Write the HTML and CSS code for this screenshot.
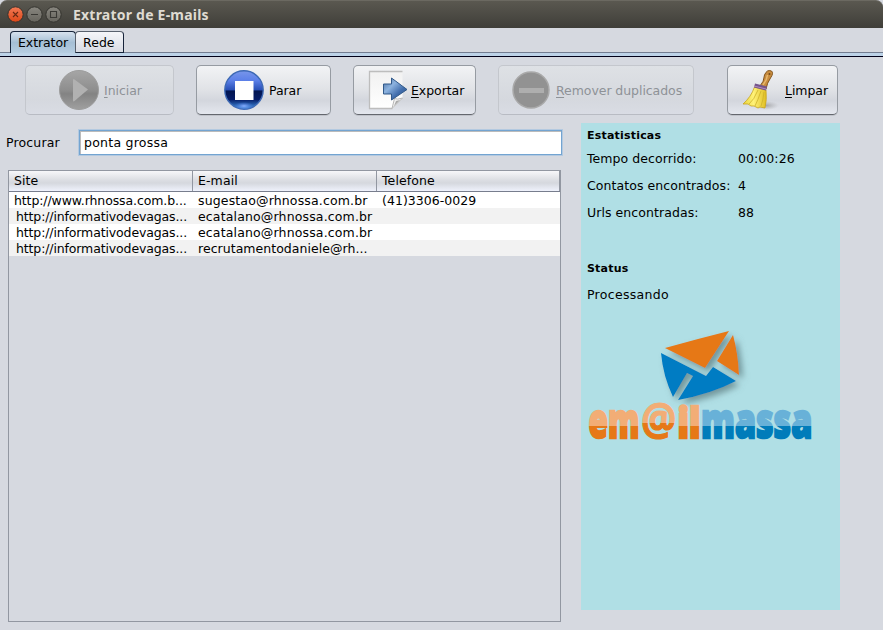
FILE: index.html
```html
<!DOCTYPE html>
<html lang="pt-BR">
<head>
<meta charset="utf-8">
<title>Extrator de E-mails</title>
<link rel="stylesheet" href="styles.css">
</head>
<body>
<header class="titlebar">
  <svg class="controls" width="58" height="20" viewBox="0 0 58 20">
    <defs>
      <linearGradient id="close" x1="0" y1="0" x2="0" y2="1"><stop offset="0" stop-color="#f37a55"/><stop offset="1" stop-color="#dd4717"/></linearGradient>
      <linearGradient id="ctl" x1="0" y1="0" x2="0" y2="1"><stop offset="0" stop-color="#898780"/><stop offset="1" stop-color="#66645d"/></linearGradient>
    </defs>
    <g stroke="#34332e" stroke-width="1"><circle cx="10.5" cy="9.500" r="7.7" fill="url(#close)"/><circle cx="29.5" cy="9.500" r="7.7" fill="url(#ctl)"/><circle cx="48.5" cy="9.500" r="7.7" fill="url(#ctl)"/></g>
    <g fill="none" stroke="#3a3935" stroke-width="1.1"><path d="M8 7l5 5M13 7l-5 5" stroke="#672a14"/><path d="M26 9.500h7M45.500 6.500h6v6h-6z"/></g>
  </svg>
  <h1>Extrator de E-mails</h1>
</header>
<nav class="tabs"><span class="tab active">Extrator</span><span class="tab">Rede</span></nav>
<div class="toolbar">
  <button class="btn iniciar" disabled>
    <svg width="42" height="42" viewBox="0 0 42 42"><defs><linearGradient id="gr" x1="0" y1="0" x2="0" y2="1"><stop offset="0" stop-color="#a6a6a6"/><stop offset=".5" stop-color="#8e8e8e"/><stop offset=".6" stop-color="#838383"/><stop offset="1" stop-color="#a0a0a0"/></linearGradient></defs><circle cx="21" cy="21" r="19.500" fill="url(#gr)" stroke="#9d9d9d"/><path d="M15 11Q15 9.500 16.500 10.500L30 20.500 16.500 32Q15 33 15 31.500z" fill="#b1b1b1"/></svg>
    <span><u>I</u>niciar</span>
  </button>
  <button class="btn parar">
    <svg width="42" height="42" viewBox="0 0 42 42"><defs><linearGradient id="bl" x1="0" y1="0" x2="0" y2="1"><stop offset="0" stop-color="#7896ea"/><stop offset=".25" stop-color="#5c80e8"/><stop offset=".49" stop-color="#2a51b8"/><stop offset=".53" stop-color="#031650"/><stop offset=".75" stop-color="#061d69"/><stop offset="1" stop-color="#459be9"/></linearGradient><radialGradient id="glow"><stop offset="0" stop-color="#89b0ff"/><stop offset="1" stop-color="#4874df" stop-opacity="0"/></radialGradient></defs><circle cx="21" cy="21" r="19.200" fill="url(#bl)" stroke="#3d69b4" stroke-width="1.400"/><ellipse cx="21" cy="37" rx="10" ry="4" fill="url(#glow)"/><path d="M12 12h18.500v19H12z" fill="#fff"/></svg>
    <span>Parar</span>
  </button>
  <button class="btn exportar">
    <svg width="42" height="42" viewBox="0 0 42 42"><defs><linearGradient id="arr" x1="0" y1="0" x2="1" y2="1"><stop offset="0" stop-color="#456b9d"/><stop offset=".35" stop-color="#8db3df"/><stop offset=".65" stop-color="#426ead"/><stop offset="1" stop-color="#294f86"/></linearGradient><linearGradient id="pg" x1="0" y1="0" x2="0" y2="1"><stop offset="0" stop-color="#f1f1f1"/><stop offset="1" stop-color="#fff"/></linearGradient></defs><path d="M3.500 2.500h33V29l-10 10.500h-23z" fill="url(#pg)"/><path d="M36.500 2.500h-33v37h23" fill="none" stroke="#bdbdbd" stroke-width="1.300"/><path d="M26 39.500L28.500 29.500Q31 31 36.500 29z" fill="#f2f2f2" stroke="#b8b8b8"/><path d="M28 37l2-5 4-1z" fill="#aaa"/><path d="M17.500 15h8V9L41 20.500 25.500 31v-6h-8z" fill="url(#arr)" stroke="#315989"/></svg>
    <span><u>E</u>xportar</span>
  </button>
  <button class="btn remover" disabled>
    <svg width="42" height="42" viewBox="0 0 42 42"><circle cx="21" cy="21" r="18" fill="#929292" stroke="#a9a9a9" stroke-width="1.500"/><path d="M9 19h25v5H9z" fill="#aeaeae"/></svg>
    <span><u>R</u>emover duplicados</span>
  </button>
  <button class="btn limpar">
    <svg width="42" height="42" viewBox="0 0 42 42"><defs><linearGradient id="straw"><stop offset="0" stop-color="#e8d33a"/><stop offset=".45" stop-color="#fff278"/><stop offset="1" stop-color="#dfbd20"/></linearGradient><radialGradient id="sh"><stop offset="0" stop-color="#8d8e93" stop-opacity=".7"/><stop offset="1" stop-color="#aaa" stop-opacity="0"/></radialGradient></defs><ellipse cx="24" cy="36.500" rx="13" ry="4.500" fill="url(#sh)"/><path d="M18 17Q22 13 22.500 6Q25 0 29.500 2Q32 4 28.500 9Q25 14 24 20z" fill="#c88c3e" stroke="#83551f"/><path d="M21 16q4-5 4.500-10" fill="none" stroke="#e8b86e" stroke-width="1.500"/><circle cx="27.500" cy="5" r="1" fill="#75491c"/><path d="M12.500 18L24 21Q25 31 23 39L18 38 16 39 12 37 9 37 6 35 1 35Q9 28 12.500 18z" fill="url(#straw)" stroke="#c8a51f" stroke-width=".8"/><path d="M16 21Q12 31 7 35M19 22Q16 31 13 37M22 23Q21 32 19 37" fill="none" stroke="#cdb12b" stroke-width=".8"/><path d="M12.500 16.500l12 3" stroke="#75558b" stroke-width="4"/><path d="M12 17l12 3" stroke="#b28dbd"/></svg>
    <span><u>L</u>impar</span>
  </button>
</div>
<main class="content">
  <section class="left">
    <div class="search"><label for="q">Procurar</label><input id="q" type="text" value="ponta grossa"></div>
    <div class="grid">
      <div class="row head"><span>Site</span><span>E-mail</span><span>Telefone</span></div>
      <div class="row"><span class="url">http://www.rhnossa.com.b...</span><span class="mail">sugestao@rhnossa.com.br</span><span>(41)3306-0029</span></div>
      <div class="row alt"><span class="url indent">http://informativodevagas...</span><span class="mail">ecatalano@rhnossa.com.br</span><span></span></div>
      <div class="row"><span class="url indent">http://informativodevagas...</span><span class="mail">ecatalano@rhnossa.com.br</span><span></span></div>
      <div class="row alt"><span class="url indent">http://informativodevagas...</span><span>recrutamentodaniele@rh...</span><span></span></div>
    </div>
  </section>
  <aside class="stats">
    <h2>Estatisticas</h2>
    <dl>
      <dt>Tempo decorrido:</dt><dd>00:00:26</dd>
      <dt>Contatos encontrados:</dt><dd>4</dd>
      <dt>Urls encontradas:</dt><dd>88</dd>
    </dl>
    <h2 class="status">Status</h2>
    <p>Processando</p>
    <svg class="logo" width="259" height="130" viewBox="0 0 259 130">
      <defs>
        <linearGradient id="or" gradientUnits="userSpaceOnUse" x1="0" y1="-30" x2="0" y2="10"><stop offset=".45" stop-color="#f2ad76"/><stop offset=".45" stop-color="#e67817"/></linearGradient>
        <linearGradient id="bu" gradientUnits="userSpaceOnUse" x1="0" y1="-30" x2="0" y2="10"><stop offset=".45" stop-color="#68b1d8"/><stop offset=".45" stop-color="#007cba"/></linearGradient>
        <filter id="drop" x="-20%" y="-20%" width="150%" height="150%"><feDropShadow dx="4" dy="4" stdDeviation="3" flood-color="#526f73" flood-opacity=".65"/></filter>
      </defs>
      <g filter="url(#drop)">
        <path d="M84 18Q116 9 148 1L124 38z" fill="#e67817"/><path d="M152 5Q157 23 158 45L136 31z" fill="#e67817"/>
        <path d="M80 23Q82 46 92 67L106 43 112 46 97 70Q130 64 155 51L132 37 125 46z" fill="#007cc3"/>
      </g>
      <g class="wordmark">
        <g transform="translate(7.500 108) scale(.66 1)"><text font-size="48" textLength="77" lengthAdjust="spacingAndGlyphs" fill="url(#or)" stroke="url(#or)">em</text></g>
        <g transform="translate(60 105) scale(.87 1)"><text class="at" font-size="45" textLength="40.500" lengthAdjust="spacingAndGlyphs" fill="url(#or)" stroke="url(#or)">@</text></g>
        <g transform="translate(96.500 108) scale(.82 1)"><text font-size="42" textLength="28" lengthAdjust="spacingAndGlyphs" fill="url(#or)" stroke="url(#or)">il</text></g>
        <g transform="translate(120 108) scale(.7 1)"><text font-size="48" textLength="159" lengthAdjust="spacingAndGlyphs" fill="url(#bu)" stroke="url(#bu)">massa</text></g>
      </g>
    </svg>
  </aside>
</main>
</body>
</html>
```
FILE: styles.css
```css
* { box-sizing: border-box; }
html { background: #fff; }
body { margin: 0; width: 883px; height: 630px; overflow: hidden; background: #d6d9e0; color: #000; font: 12.5px/16px "DejaVu Sans", sans-serif; letter-spacing: .04px; }
.titlebar { height: 28px; display: flex; align-items: center; padding: 1px 0 0 5px; border-radius: 7px 7px 0 0; background: linear-gradient(#5a5850, #3f3e39); border-top: 1px solid #6b6961; }
.titlebar h1 { margin: 0 0 0 10px; color: #dfdbd2; font: bold 14px/20px "Noto Sans", sans-serif; letter-spacing: .22px; }
.tabs { height: 29px; display: flex; padding: 3px 0 0 10px; background: linear-gradient(#d6d9e0 24px, #737d90 24px, #737d90 25px, #bdd3e8 25px, #bdd3e8 28px, #000018 28px); }
.tab { height: 22px; width: 49px; padding: 3px 0 0 7px; border: 1px solid #17243a; border-top-color: #59616d; border-left-color: #59616d; border-radius: 4px 4px 0 0; background: linear-gradient(#f5f6f9, #d8dbe3); }
.tab.active { width: 66px; padding-left: 7px; background: linear-gradient(#d7e2ee, #a5bfd5 50%, #b6cde1); border-color: #17243a; border-bottom: 0; margin-right: -1px; letter-spacing: -.08px; }
.toolbar { height: 66px; display: flex; align-items: flex-start; padding: 8px 0 0 25px; }
.btn { height: 50px; display: flex; align-items: center; padding: 0; border: 1px solid #969ba2; border-bottom-color: #64676e; border-radius: 5px; background: linear-gradient(#f2f3f5, #e0e2e6 50%, #d3d6dd 72%, #e4e7ee); box-shadow: 0 1px 0 #c0c3ca; font: inherit; letter-spacing: -.06px; color: #000; white-space: nowrap; }
.btn:disabled { color: #8e9297; border-color: #c4c7cd; border-bottom-color: #b8bbc3; background: linear-gradient(#dee1e5, #d5d8de 70%, #d9dce4); box-shadow: none; }
.btn svg { flex: none; }
.btn span { padding-top: 2px; }
.btn u { text-underline-offset: 2px; text-decoration-thickness: 1px; text-decoration-skip-ink: none; }
.iniciar { width: 149px; padding-left: 32px; margin-right: 22px; gap: 4px; }
.parar { width: 135px; padding-left: 26px; margin-right: 22px; gap: 4px; }
.exportar { width: 123px; padding-left: 12px; margin-right: 22px; gap: 3px; }
.remover { width: 196px; padding-left: 11px; margin-right: 33px; gap: 4px; }
.limpar { width: 111px; padding-left: 14px; gap: 1px; }
.content { display: flex; }
.left { width: 581px; padding-top: 6px; }
.search { display: flex; align-items: center; height: 27px; padding-left: 6px; }
.search label { width: 72px; letter-spacing: .15px; }
.search input { width: 485px; height: 27px; padding: 0 4px; border: 2px solid #73a4d1; outline: 1px solid #b3c9e0; outline-offset: -1px; box-shadow: inset 1px 1px #bbb; background: #fff; font: inherit; letter-spacing: .25px; color: #000; }
.grid { width: 553px; height: 452px; margin: 14px 0 0 8px; border: 1px solid #9297a1; }
.row { display: grid; grid-template-columns: 184px 184px 1fr; height: 16px; line-height: 18px; background: #fff; white-space: nowrap; }
.row.alt { background: #f2f2f2; }
.row span { height: 16px; padding-left: 5px; }
.row .url { letter-spacing: -.1px; }
.row .indent { padding-left: 7px; letter-spacing: -.13px; }
.row .mail { letter-spacing: .15px; }
.row.head { height: 21px; line-height: 20px; background: linear-gradient(#f7f7f9, #dcdee3 45%, #d5d8de 60%, #eff2fc); border-bottom: 1px solid #777d8d; }
.head span { height: 20px; border-right: 1px solid #9297a1; letter-spacing: .1px; }
.stats { width: 259px; height: 487px; padding: 5px 0 0 6px; background: #b0dfe5; }
.stats h2 { margin: 0; font: bold 11px/16px "DejaVu Sans", sans-serif; letter-spacing: .2px; }
.stats dl { margin: 7px 0 0; display: grid; grid-template-columns: 151px 1fr; row-gap: 11px; letter-spacing: .07px; }
.stats dd { margin: 0; }
.stats .status { margin-top: 40px; }
.stats p { margin: 10px 0 0; letter-spacing: .3px; }
.logo { display: block; margin: 27px 0 0 -6px; }
.wordmark { font-family: "Open Sans", sans-serif; font-weight: 800; letter-spacing: 0; stroke-width: 2.4; }
.wordmark .at { font-weight: 700; stroke-width: 1.2; }
```
